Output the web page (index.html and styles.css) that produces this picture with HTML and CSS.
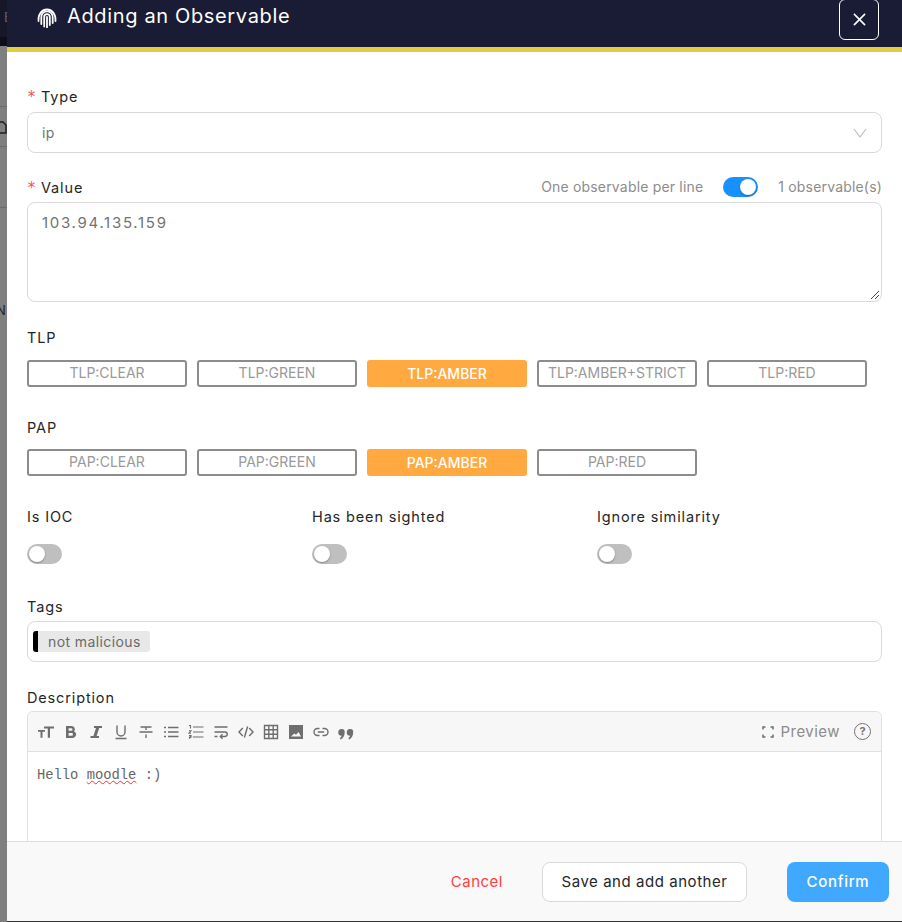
FILE: index.html
```html
<!DOCTYPE html>
<html>
<head>
  <title>Adding an Observable</title>
  <link rel="stylesheet" href="styles.css">
</head>
<body>

  <div class="backdrop">
    <div class="backdrop-head"><span class="backdrop-letter">E</span></div>
    <div class="backdrop-bar"></div>
    <div class="backdrop-row"></div>
    <div class="backdrop-row backdrop-row-icon">
      <svg class="backdrop-icon" viewBox="0 0 8 14"><path d="M-3 2h6l3 3v8H-3z" /></svg>
    </div>
    <div class="backdrop-row backdrop-row-tall"></div>
    <div class="backdrop-letter-n">N</div>
  </div>

  <div class="modal">
    <div class="modal-header">
      <div class="modal-title">
        <svg class="finger-icon" viewBox="0 0 20 20">
          <path d="M1.5 13C1 6 5 1.500 10 1.500S19 6 18.500 13" />
          <path d="M4.300 16V9a5.700 5.700 0 0 1 11.400 0v6" />
          <path d="M7.200 18.500V9a2.800 2.800 0 0 1 5.600 0v8" />
          <path d="M10 19.500V9" />
        </svg>
        <span>Adding an Observable</span>
      </div>
      <button class="close-btn">
        <svg viewBox="0 0 14 14"><path d="M1 1l12 12M13 1L1 13" /></svg>
      </button>
    </div>

    <div class="modal-body">
      <label class="label"><span class="req">*</span>Type</label>
      <div class="input select-box">
        <span>ip</span>
        <svg class="chevron" viewBox="0 0 14 10"><path d="M1 1l6 8 6-8" /></svg>
      </div>

      <div class="value-row">
        <label class="label"><span class="req">*</span>Value</label>
        <div class="value-extra">
          <span class="value-note">One observable per line</span>
          <span class="switch switch-on"></span>
          <span class="value-note">1 observable(s)</span>
        </div>
      </div>
      <div class="input textarea-box">
        103.94.135.159
        <svg class="resize-grip" viewBox="0 0 10 10"><path d="M9 1L1 9M9 5L5 9" /></svg>
      </div>

      <label class="label label-marking">TLP</label>
      <div class="marking-row">
        <div class="marking">TLP:CLEAR</div>
        <div class="marking">TLP:GREEN</div>
        <div class="marking marking-on">TLP:AMBER</div>
        <div class="marking">TLP:AMBER+STRICT</div>
        <div class="marking">TLP:RED</div>
      </div>

      <label class="label label-pap">PAP</label>
      <div class="marking-row">
        <div class="marking">PAP:CLEAR</div>
        <div class="marking">PAP:GREEN</div>
        <div class="marking marking-on">PAP:AMBER</div>
        <div class="marking">PAP:RED</div>
      </div>

      <div class="flags">
        <div>
          <div class="label flag-label">Is IOC</div>
          <span class="switch"></span>
        </div>
        <div>
          <div class="label flag-label">Has been sighted</div>
          <span class="switch"></span>
        </div>
        <div>
          <div class="label flag-label">Ignore similarity</div>
          <span class="switch"></span>
        </div>
      </div>

      <label class="label label-tags">Tags</label>
      <div class="input tags-box">
        <span class="tag">not malicious</span>
      </div>

      <label class="label label-desc">Description</label>
      <div class="editor">
        <div class="toolbar">
          <div class="tools">
            <svg class="tool fill" viewBox="0 0 16 16"><path d="M0 6h7v1.700H4.500v6H2.500v-6H0zM6 2.500h10v2h-4v9.200H9.800V4.500H6z" /></svg>
            <svg class="tool fill" viewBox="0 0 16 16"><path fill-rule="evenodd" d="M3 2h5.500a3.300 3.300 0 0 1 2.600 5.400A3.500 3.500 0 0 1 9 14H3zM5.600 4.200v2.600h2.600a1.300 1.300 0 0 0 0-2.600zM5.600 9v2.800h3a1.400 1.400 0 0 0 0-2.800z" /></svg>
            <svg class="tool fill" viewBox="0 0 16 16"><path d="M6 2h8v2h-2.800L8.600 12H11v2H2.500v-2h2.900L8 4H6z" /></svg>
            <svg class="tool line" viewBox="0 0 16 16"><path d="M4 1.500V8a4 4 0 0 0 8 0V1.500M2.500 14.500h11" /></svg>
            <svg class="tool line" viewBox="0 0 16 16"><path d="M2.500 3h11M8 3v3M1.500 8h13M8 10.500V14" /></svg>
            <svg class="tool line" viewBox="0 0 16 16"><path d="M5 3.500h10.500M5 8h10.500M5 12.500h10.500M1 3.500h2M1 8h2M1 12.500h2" /></svg>
            <svg class="tool line thin" viewBox="0 0 16 16"><path d="M5 3h10.500M5 8h10.500M5 13h10.500M1 1.500h1.500v3M1 6.800h2L1 9.200h2M1 11.500h2L1.800 13H3L1 14.500" /></svg>
            <svg class="tool line" viewBox="0 0 16 16"><path d="M1.500 3h13M1.500 8H12a2.200 2.200 0 0 1 0 4.500H7.500M9.500 10.300l-2.200 2.200 2.200 2.200M1.500 12.500h3" /></svg>
            <svg class="tool line" viewBox="0 0 16 16"><path d="M4.800 4L1 8l3.800 4M11.200 4L15 8l-3.800 4M9.600 2.500L6.400 13.500" /></svg>
            <svg class="tool line" viewBox="0 0 16 16"><path d="M1.500 1.500h13v13h-13zM1.500 5.800h13M1.500 10.200h13M5.800 1.500v13M10.200 1.500v13" /></svg>
            <svg class="tool fill" viewBox="0 0 16 16"><path fill-rule="evenodd" d="M1 1h14v14H1zM3 12.500h10L10.500 8 8 10.800 6.300 9.400z" /></svg>
            <svg class="tool line" viewBox="0 0 16 16"><path d="M6.500 4.500H4.500a3.500 3.500 0 0 0 0 7h2M9.500 4.500h2a3.500 3.500 0 0 1 0 7h-2M4.800 8h6.400" /></svg>
            <svg class="tool fill quote" viewBox="0 0 16 16"><path d="M3.500 3a3 3 0 0 1 3.200 3c0 3.500-1.300 6-4 7.500l-.9-1.200c1-.8 1.700-1.700 1.900-2.600A3.200 3.200 0 0 1 3.500 3zM12 3a3 3 0 0 1 3.200 3c0 3.500-1.300 6-4 7.500l-.9-1.200c1-.8 1.700-1.700 1.900-2.600A3.200 3.200 0 0 1 12 3z" /></svg>
          </div>
          <div class="toolbar-right">
            <svg class="fullscreen" viewBox="0 0 12 12"><path d="M1 3.500V1h2.500M8.500 1H11v2.500M11 8.500V11H8.500M3.500 11H1V8.500" /></svg>
            <span class="preview">Preview</span>
            <span class="help">?</span>
          </div>
        </div>
        <div class="editor-text">Hello <span class="typo">moodle</span> :)</div>
      </div>
    </div>

    <div class="modal-footer">
      <span class="cancel">Cancel</span>
      <button class="btn-save">Save and add another</button>
      <button class="btn-confirm">Confirm</button>
    </div>
  </div>

</body>
</html>
```

FILE: styles.css
```css
* {
  box-sizing: border-box;
}

body {
  margin: 0;
  height: 922px;
  display: flex;
  overflow: hidden;
  font-family: Inter, "Noto Sans", sans-serif;
  font-size: 14px;
  background-color: #7f7f7f;
}

/* page behind the modal */
.backdrop {
  width: 7px;
  flex-shrink: 0;
  overflow: hidden;
}

.backdrop-head {
  height: 37px;
  padding: 8px 0 0 4px;
  background-color: #161729;
}

.backdrop-letter {
  color: #6b5f68;
  font-size: 13px;
}

.backdrop-bar {
  height: 9px;
  background-color: #0d0e1a;
}

.backdrop-row {
  height: 61px;
  border-bottom: 1px solid #6c6c6c;
}

.backdrop-row-icon {
  height: 40px;
  padding-top: 13px;
}

.backdrop-row-tall {
  height: 61px;
}

.backdrop-icon {
  display: block;
  width: 8px;
  height: 14px;
  fill: none;
  stroke: #1f1f1f;
  stroke-width: 1.5;
}

.backdrop-letter-n {
  margin: 94px 0 0 -4px;
  color: #222;
  font-size: 13px;
  line-height: 16px;
}

.modal {
  width: 895px;
  height: 922px;
  display: flex;
  flex-direction: column;
  border-bottom: 1px solid #333;
  background-color: #fff;
}

.modal-header {
  height: 52px;
  flex-shrink: 0;
  display: flex;
  justify-content: space-between;
  padding: 0 23px 0 30px;
  background-color: #1a1c35;
  border-bottom: 5px solid #e6cc3f;
}

.modal-title {
  display: flex;
  align-items: center;
  gap: 10px;
  height: 32px;
  color: #fff;
  font-size: 20px;
  letter-spacing: 0.65px;
}

.finger-icon {
  width: 20px;
  height: 20px;
  margin-top: 3px;
  fill: none;
  stroke: #fff;
  stroke-width: 1.8;
  stroke-linecap: round;
}

.close-btn {
  width: 40px;
  height: 41px;
  margin-top: -1px;
  padding: 0;
  display: flex;
  align-items: center;
  justify-content: center;
  background: none;
  border: 1px solid #fff;
  border-radius: 6px;
}

.close-btn svg {
  width: 13px;
  height: 13px;
  fill: none;
  stroke: #fff;
  stroke-width: 1.7;
}

.modal-body {
  flex: 1;
  min-height: 0;
  overflow: hidden;
  padding: 35px 20px 0;
}

.label {
  display: block;
  height: 20px;
  color: #262626;
  font-size: 14.5px;
  line-height: 20px;
  letter-spacing: 0.85px;
}

.req {
  display: inline-block;
  width: 14px;
  color: #ff4d4f;
  font-family: "DejaVu Sans Mono", monospace;
  font-size: 15px;
  letter-spacing: 0;
}

.input {
  border: 1px solid #d9d9d9;
  border-radius: 8px;
  background-color: #fff;
  color: #737373;
}

.select-box {
  height: 41px;
  margin-top: 5px;
  padding: 0 14px;
  display: flex;
  align-items: center;
  justify-content: space-between;
  letter-spacing: 0.3px;
}

.chevron {
  width: 14px;
  height: 10px;
  fill: none;
  stroke: #bfbfbf;
  stroke-width: 1.2;
}

.value-row {
  display: flex;
  justify-content: space-between;
  align-items: center;
  margin-top: 24px;
}

.value-row .label {
  padding-top: 1px;
}

.value-extra {
  display: flex;
  align-items: center;
  gap: 20px;
  color: #8c8c8c;
}

.value-note {
  padding-bottom: 2px;
  letter-spacing: 0.18px;
}

.textarea-box {
  position: relative;
  height: 100px;
  margin-top: 5px;
  padding: 10px 14px;
  font-size: 15px;
  line-height: 20px;
  letter-spacing: 1.7px;
}

.resize-grip {
  position: absolute;
  right: 1px;
  bottom: 1px;
  width: 10px;
  height: 10px;
  fill: none;
  stroke: #444;
  stroke-width: 1;
}

.switch {
  position: relative;
  display: inline-block;
  width: 35px;
  height: 20px;
  border-radius: 10px;
  background-color: #bfbfbf;
}

.switch::after {
  content: "";
  position: absolute;
  top: 2px;
  left: 2px;
  width: 16px;
  height: 16px;
  border-radius: 50%;
  background-color: #fff;
  box-shadow: 0 1px 2px rgba(0, 0, 0, 0.3);
}

.switch-on {
  background-color: #1890ff;
}

.switch-on::after {
  left: 17px;
}

.label-marking {
  margin-top: 26px;
}

.label-pap {
  margin-top: 31px;
}

.marking-row {
  display: flex;
  gap: 10px;
  margin-top: 11px;
}

.label-marking + .marking-row {
  margin-top: 12px;
}

.marking {
  width: 160px;
  height: 27px;
  border: 2px solid #8c8c8c;
  border-radius: 3px;
  color: #999;
  text-align: center;
  line-height: 21px;
  white-space: nowrap;
}

.marking-on {
  border-color: #ffa940;
  background-color: #ffa940;
  color: #fff;
  font-weight: 500;
  line-height: 23px;
}

.flags {
  display: grid;
  grid-template-columns: 285px 285px 285px;
  margin-top: 31px;
}

.flag-label {
  margin-bottom: 17px;
}

.flags .switch {
  display: block;
}

.label-tags {
  margin-top: 33px;
}

.tags-box {
  height: 41px;
  margin-top: 4px;
  padding: 9px 5px;
}

.tag {
  display: inline-block;
  height: 21px;
  width: 117px;
  padding-left: 10px;
  border-left: 5px solid #000;
  border-radius: 3px;
  background-color: #e8e8e8;
  color: #6a6a6a;
  line-height: 21px;
  letter-spacing: 0.4px;
}

.label-desc {
  margin-top: 26px;
}

.editor {
  margin-top: 3px;
  height: 200px;
  border: 1px solid #e0e0e0;
  border-radius: 6px 6px 0 0;
}

.toolbar {
  height: 40px;
  display: flex;
  justify-content: space-between;
  align-items: center;
  padding: 2px 10px 0;
  background-color: #f7f7f7;
  border-bottom: 1px solid #e0e0e0;
  border-radius: 6px 6px 0 0;
}

.tools {
  display: flex;
  gap: 9px;
}

.tool {
  width: 16px;
  height: 16px;
}

.fill {
  fill: #6e6e6e;
}

.line {
  fill: none;
  stroke: #6e6e6e;
  stroke-width: 1.4;
}

.thin {
  stroke-width: 1.1;
}

.quote {
  margin-top: 2px;
}

.toolbar-right {
  display: flex;
  align-items: center;
  margin-top: -2px;
  color: #8c8c8c;
}

.fullscreen {
  width: 12px;
  height: 12px;
  fill: none;
  stroke: #6e6e6e;
  stroke-width: 1.5;
}

.preview {
  margin: 0 14px 0 7px;
  font-size: 15px;
  letter-spacing: 0.45px;
}

.help {
  width: 17px;
  height: 17px;
  border: 1.5px solid #737373;
  border-radius: 50%;
  color: #737373;
  font-size: 11px;
  font-weight: 700;
  text-align: center;
  line-height: 14px;
}

.editor-text {
  padding: 14px 9px;
  color: #666;
  font-family: "Liberation Mono", monospace;
  font-size: 13.8px;
  line-height: 20px;
}

.typo {
  text-decoration: underline wavy #ff3030 1.2px;
}

.modal-footer {
  height: 80px;
  flex-shrink: 0;
  display: flex;
  align-items: center;
  justify-content: flex-end;
  padding: 0 13px 0 0;
  background-color: #f9f9f9;
  border-top: 1px solid #ddd;
}

.cancel {
  margin-right: 39px;
  color: #ff4040;
  font-size: 15px;
  letter-spacing: 0.5px;
}

.btn-save,
.btn-confirm {
  height: 40px;
  font-family: inherit;
  font-size: 15px;
  border-radius: 8px;
}

.btn-save {
  width: 205px;
  margin-right: 40px;
  background-color: #fff;
  border: 1px solid #d9d9d9;
  color: #262626;
  letter-spacing: 0.55px;
}

.btn-confirm {
  width: 102px;
  background-color: #40a9ff;
  border: none;
  color: #fff;
  font-weight: 500;
  letter-spacing: 0.7px;
}
```
